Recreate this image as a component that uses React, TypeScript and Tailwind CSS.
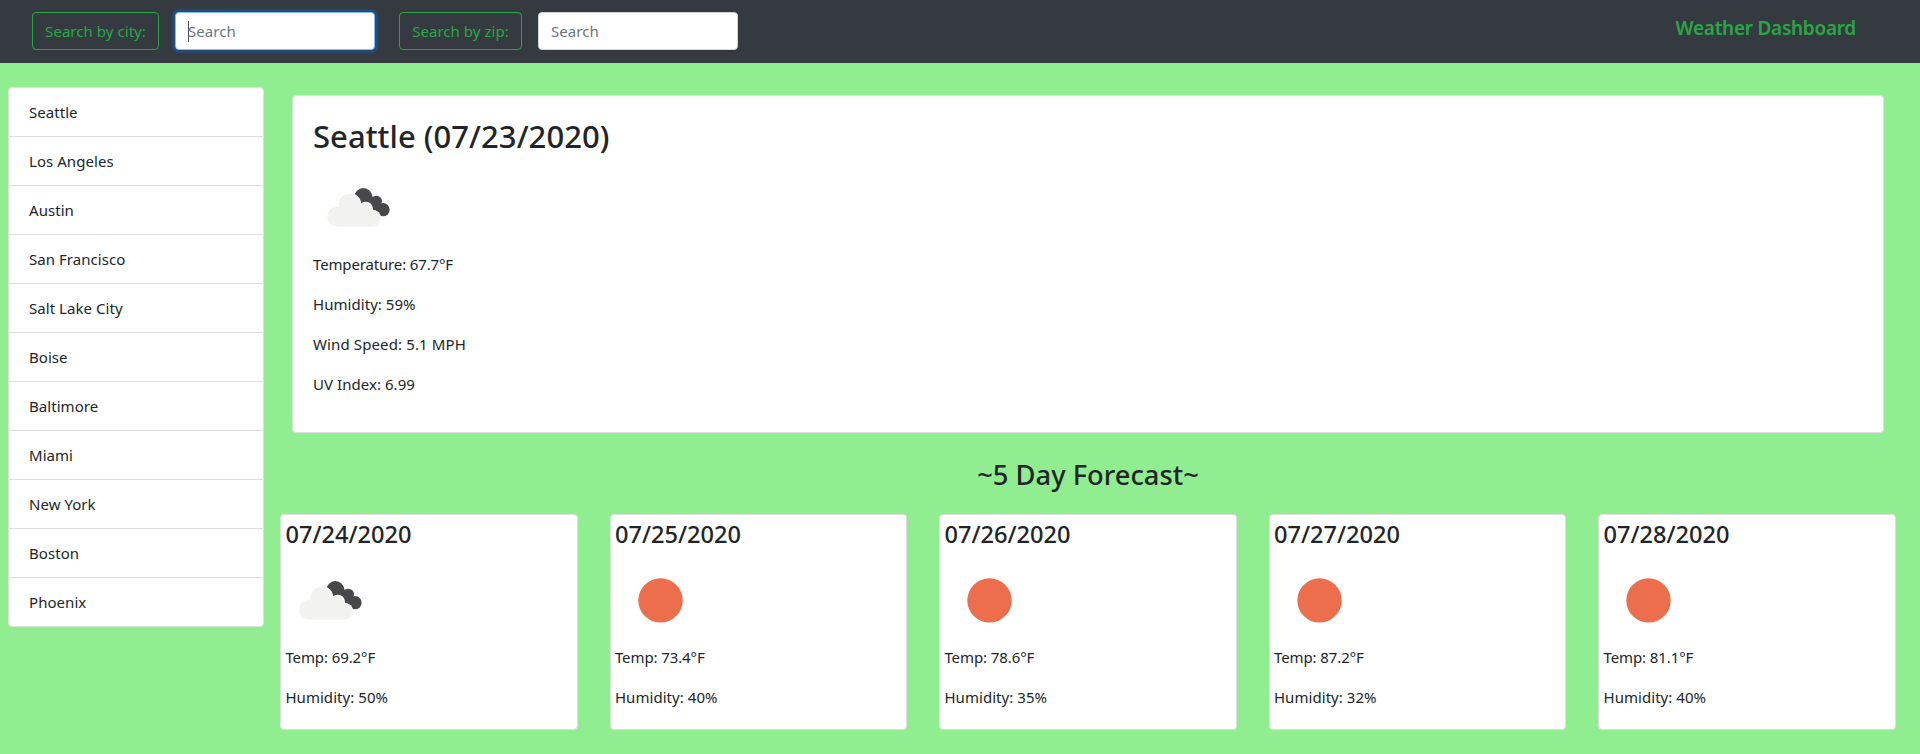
import React from 'react';

const cities = [
  'Seattle',
  'Los Angeles',
  'Austin',
  'San Francisco',
  'Salt Lake City',
  'Boise',
  'Baltimore',
  'Miami',
  'New York',
  'Boston',
  'Phoenix',
];

type Sky = 'clouds' | 'clear';

const forecast: { date: string; sky: Sky; temp: string; humidity: string }[] = [
  { date: '07/24/2020', sky: 'clouds', temp: '69.2', humidity: '50' },
  { date: '07/25/2020', sky: 'clear', temp: '73.4', humidity: '40' },
  { date: '07/26/2020', sky: 'clear', temp: '78.6', humidity: '35' },
  { date: '07/27/2020', sky: 'clear', temp: '87.2', humidity: '32' },
  { date: '07/28/2020', sky: 'clear', temp: '81.1', humidity: '40' },
];

function SkyIcon({ sky }: { sky: Sky }) {
  if (sky === 'clear') {
    return (
      <svg className="mt-[15px] h-[60px] w-[100px]" viewBox="0 0 100 60" aria-hidden="true">
        <circle cx="45.5" cy="30.4" r="22.2" fill="#ec6e4c" />
      </svg>
    );
  }
  return (
    <svg className="mt-[15px] h-[60px] w-[100px]" viewBox="99 291 300 180" aria-hidden="true">
      <g fill="#48484a">
        <circle cx="250" cy="351" r="27" />
        <circle cx="289" cy="364" r="17" />
        <circle cx="309" cy="389" r="20" />
        <path d="M250 350 L289 350 L309 389 L290 405 L240 375Z" />
      </g>
      <g fill="#ffffff">
        <circle cx="209" cy="374" r="35" />
        <circle cx="257" cy="387" r="22" />
        <circle cx="277" cy="416" r="27" />
      </g>
      <g fill="#f2f2f0">
        <circle cx="172" cy="410" r="30" />
        <circle cx="209" cy="374" r="33" />
        <circle cx="257" cy="387" r="20" />
        <circle cx="277" cy="415" r="25" />
        <rect x="172" y="385" width="105" height="55" />
      </g>
    </svg>
  );
}

function SearchField({ label, width, focused }: { label: string; width: string; focused?: boolean }) {
  return (
    <form className="flex items-center gap-4">
      <button
        type="button"
        className={`${width} h-[38px] rounded border border-[#28a745] text-center leading-6 whitespace-nowrap text-[#28a745]`}
      >
        {label}
      </button>
      <div className="relative">
        <input
          type="search"
          placeholder="Search"
          className={`block h-[38px] w-[200px] rounded border bg-white px-3 py-1.5 leading-6 outline-none placeholder:text-[#6c757d] ${
            focused ? 'border-[#80bdff] shadow-[0_0_0_3.2px_rgba(0,123,255,0.25)]' : 'border-[#ced4da]'
          }`}
        />
        {focused && <span className="absolute top-[9px] left-[13px] h-[21px] w-px bg-[#495057]" />}
      </div>
    </form>
  );
}

export default function App() {
  return (
    <div className="min-h-[754px] bg-[#90ee90] font-['Noto_Sans','Open_Sans',sans-serif] text-[15px] leading-6 tracking-[0.05px] text-[#212529]">
      <nav className="flex h-[63px] items-start gap-6 bg-[#343a40] pt-3 pl-8">
        <SearchField label="Search by city:" width="w-[127px]" focused />
        <SearchField label="Search by zip:" width="w-[123px]" />
        <h5 className="mt-1 mr-16 ml-auto text-[19px] leading-6 font-semibold tracking-[-0.27px] text-[#28a745]">
          Weather Dashboard
        </h5>
      </nav>

      <div className="flex items-start pr-6 pl-2">
        <ul className="mt-6 w-64 divide-y divide-[#dfdfdf] rounded border border-[#dfdfdf] bg-white">
          {cities.map((city) => (
            <li key={city} className="px-5 py-3">
              {city}
            </li>
          ))}
        </ul>

        <main className="ml-4 flex-1 pt-8">
          <section className="mr-3 ml-3 h-[338px] rounded border border-[#dfdfdf] bg-white px-5 pt-[21px]">
            <h2 className="-mb-px text-[31px] leading-[38px] font-medium tracking-[0.04px]">Seattle (07/23/2020)</h2>
            <div className="pt-2">
              <SkyIcon sky="clouds" />
            </div>
            <div className="mt-[15px] flex flex-col gap-4">
              <p className="tracking-[-0.15px]">Temperature: 67.7°F</p>
              <p>Humidity: 59%</p>
              <p className="tracking-[0.12px]">Wind Speed: 5.1 MPH</p>
              <p>UV Index: 6.99</p>
            </div>
          </section>

          <h3 className="mt-[25px] mb-[22px] text-center text-[27.3px] leading-[34px] font-medium tracking-normal">
            ~5 Day Forecast~
          </h3>

          <section className="grid grid-cols-5 gap-8 pl-[0.4px]">
            {forecast.map((day) => (
              <article key={day.date} className="h-[216px] rounded border border-[#dfdfdf] bg-white px-1 pt-[5px]">
                <h4 className="text-[23.6px] leading-[29px] font-medium tracking-normal">{day.date}</h4>
                <div className="pt-1.5">
                  <SkyIcon sky={day.sky} />
                </div>
                <div className="mt-[15px] flex flex-col gap-4">
                  <p className="tracking-[-0.1px]">Temp: {day.temp}°F</p>
                  <p>Humidity: {day.humidity}%</p>
                </div>
              </article>
            ))}
          </section>
        </main>
      </div>
    </div>
  );
}
